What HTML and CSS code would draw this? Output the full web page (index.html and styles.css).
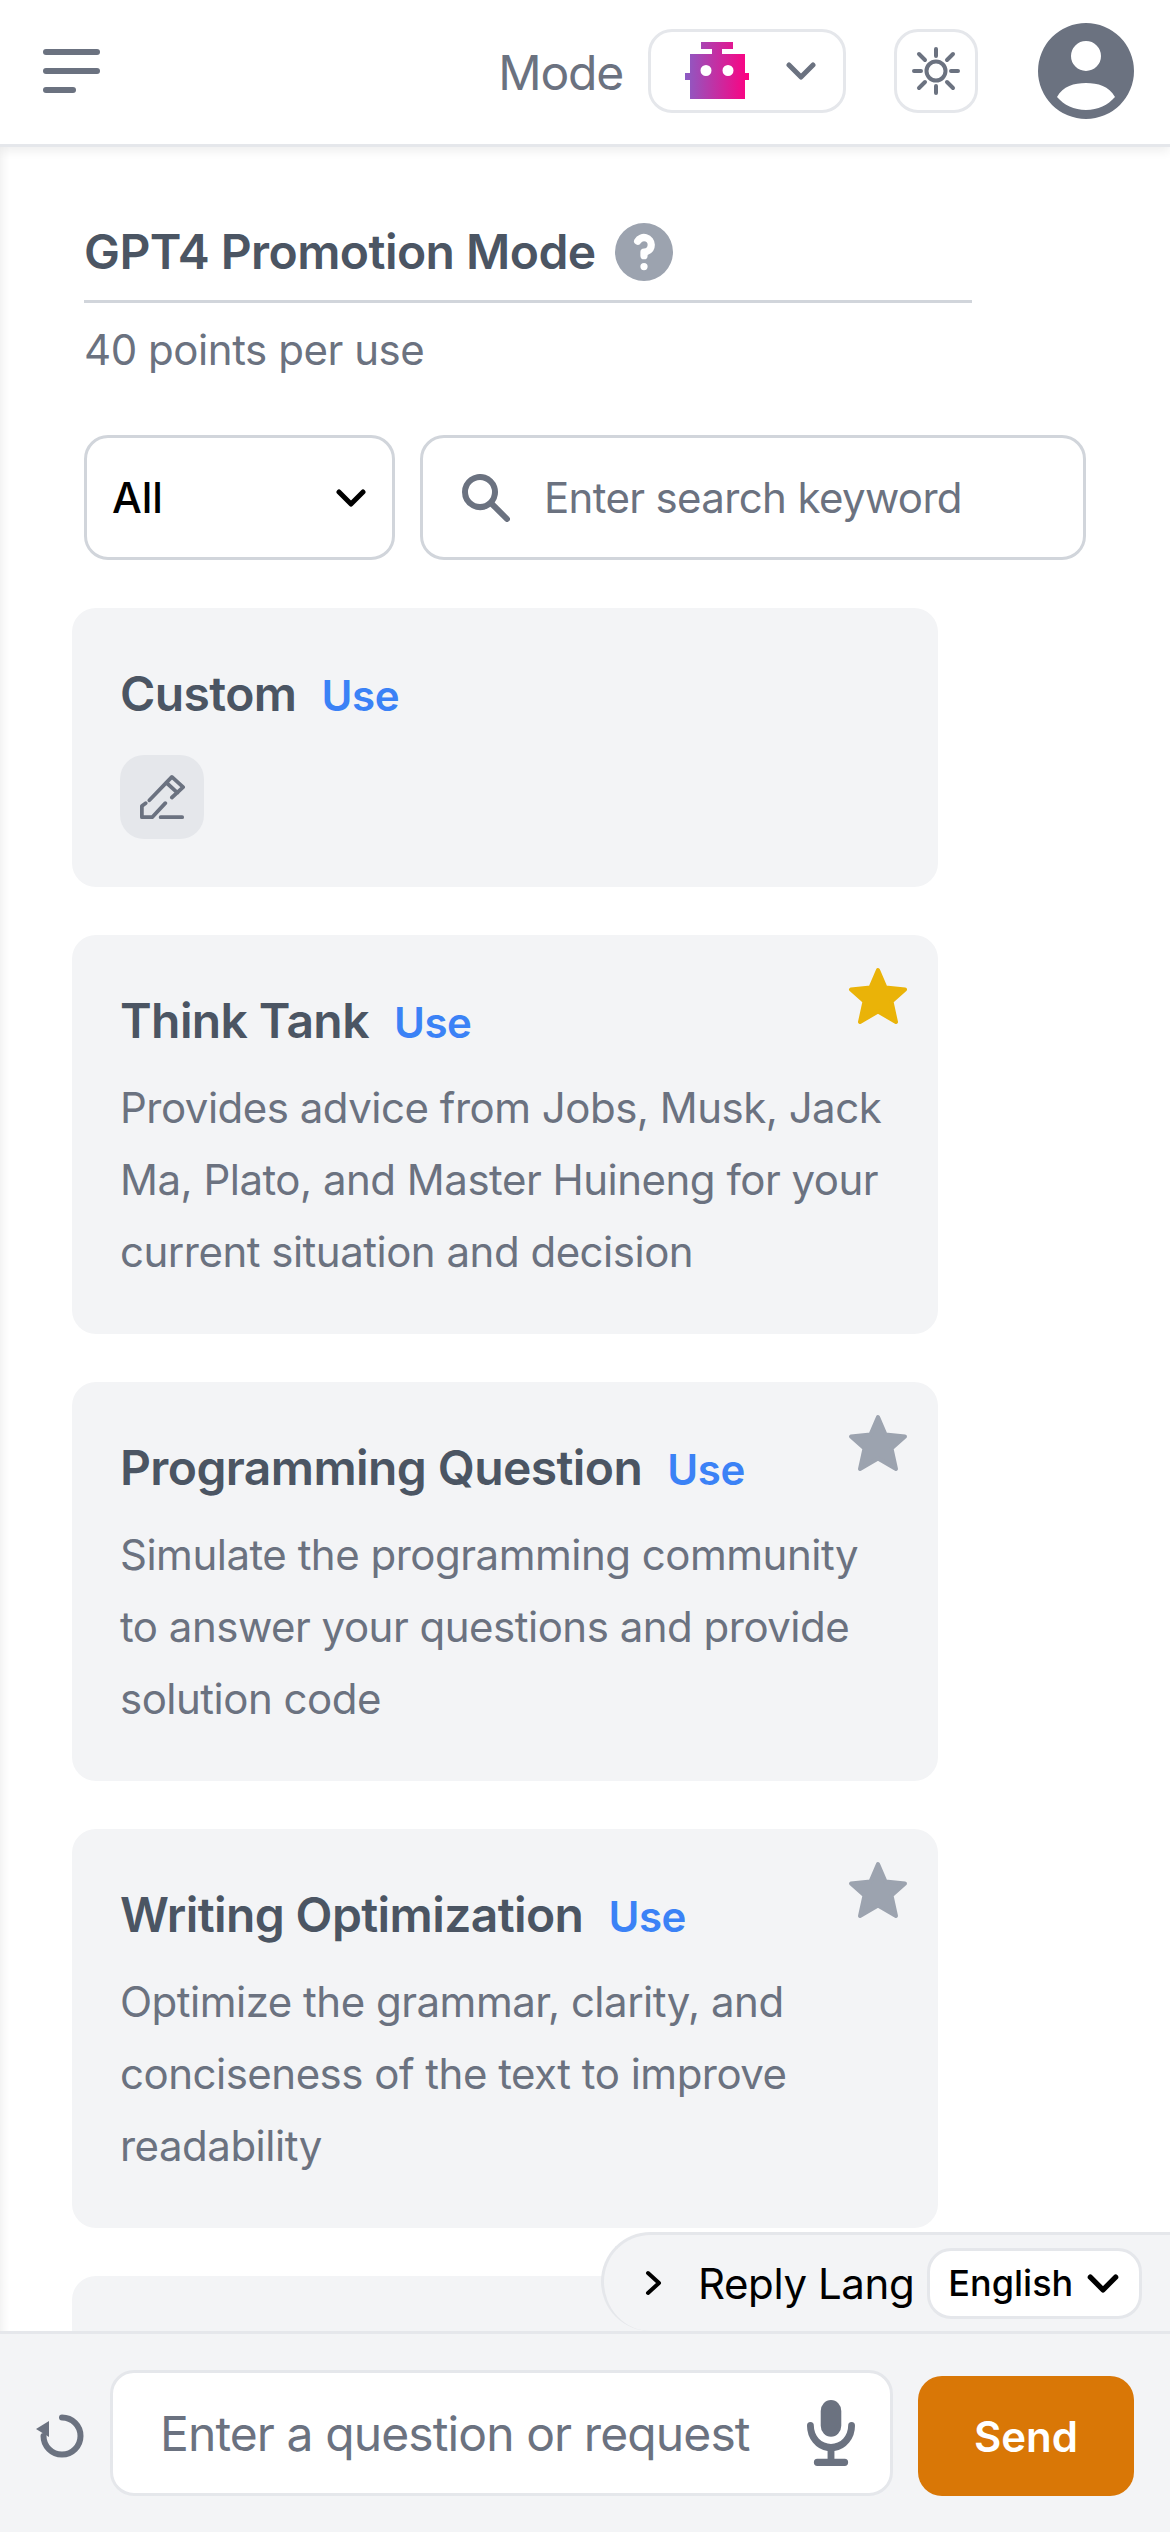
FILE: index.html
```html
<!DOCTYPE html>
<html lang="en">
<head>
<meta charset="utf-8">
<title>GPT4 Promotion Mode</title>
<link rel="stylesheet" href="styles.css">
</head>
<body>
<div class="app">
  <header class="topbar">
    <button class="menu-btn" aria-label="Menu">
      <span class="bar"></span><span class="bar"></span><span class="bar bar-short"></span>
    </button>
    <div class="top-right">
      <span class="mode-label">Mode</span>
      <div class="mode-select">
        <svg class="robot" viewBox="0 0 64 57">
          <defs><linearGradient id="rg" x1="0" x2="1" y1="0" y2="0"><stop offset="0" stop-color="#8b5cc4"/><stop offset="1" stop-color="#ff0080"/></linearGradient></defs>
          <path fill="url(#rg)" fill-rule="evenodd" d="M16 0h32v7H37v5h23v19h4v7h-4v19H5V38H0v-7h5V12h22V7H16zM21 23a5.500 5.500 0 1 0 0 11 5.500 5.500 0 0 0 0-11zM43 23a5.500 5.500 0 1 0 0 11 5.500 5.500 0 0 0 0-11z"/>
        </svg>
        <svg class="chev chev-gray" viewBox="0 0 30 18"><path d="M3 3l12 12L27 3"/></svg>
      </div>
      <div class="theme-btn">
        <svg class="sun" viewBox="0 0 48 48"><circle cx="24" cy="24" r="9.500"/><path d="M24 2v7M24 39v7M2 24h7M39 24h7M7 7l6 6M35 35l6 6M7 41l6-6M35 13l6-6"/></svg>
      </div>
      <svg class="avatar" viewBox="0 0 96 96"><path fill="#6b7280" fill-rule="evenodd" d="M48 0a48 48 0 1 0 0 96 48 48 0 0 0 0-96zM48 18a15 15 0 1 1 0 30 15 15 0 0 1 0-30zM19 74c6-11 17-14 29-14s23 3 29 14c-7 8-17 13-29 13s-22-5-29-13z"/></svg>
    </div>
  </header>

  <main class="content">
    <div class="title-block">
      <div class="title-row">
        <h1 class="page-title">GPT4 Promotion Mode</h1>
        <svg class="help" viewBox="2 2 16 16"><path fill="#9ca3af" fill-rule="evenodd" d="M18 10a8 8 0 11-16 0 8 8 0 0116 0zm-8-3a1 1 0 00-.867.5 1 1 0 11-1.731-1A3 3 0 0113 8a3.001 3.001 0 01-2 2.830V11a1 1 0 11-2 0v-1a1 1 0 011-1 1 1 0 100-2zm0 8a1 1 0 100-2 1 1 0 000 2z"/></svg>
      </div>
      <p class="points">40 points per use</p>
    </div>

    <div class="filters">
      <div class="category">
        <span>All</span>
        <svg class="chev chev-black" viewBox="0 0 30 18"><path d="M3 3l12 12L27 3"/></svg>
      </div>
      <label class="search">
        <svg class="search-icon" viewBox="2 2 16 16"><path fill="#6b7280" fill-rule="evenodd" d="M8 4a4 4 0 100 8 4 4 0 000-8zM2 8a6 6 0 1110.890 3.476l4.817 4.817a1 1 0 01-1.414 1.414l-4.816-4.816A6 6 0 012 8z"/></svg>
        <input class="search-input" type="text" placeholder="Enter search keyword">
      </label>
    </div>

    <div class="cards">
      <article class="card">
        <div class="card-head"><h2 class="card-title">Custom</h2><a class="use">Use</a></div>
        <div class="edit-btn">
          <svg class="pencil" viewBox="0 0 48 48"><path d="M10 27L34 2l12 11-12 11M28 8l12 11M27 30L13 45H2V33l4-3M22 45h23"/></svg>
        </div>
      </article>

      <article class="card card-text">
        <svg class="star star-on" viewBox="0 0 62 58"><path d="M31 3l7.500 17.500 19.500 2-13.500 12 4.500 20.500-18-10.500-18 10.500 4.500-20.500L4 22.500l19.500-2z"/></svg>
        <div class="card-head"><h2 class="card-title">Think Tank</h2><a class="use">Use</a></div>
        <p class="card-desc">Provides advice from Jobs, Musk, Jack Ma, Plato, and Master Huineng for your current situation and decision</p>
      </article>

      <article class="card card-text">
        <svg class="star" viewBox="0 0 62 58"><path d="M31 3l7.500 17.500 19.500 2-13.500 12 4.500 20.500-18-10.500-18 10.500 4.500-20.500L4 22.500l19.500-2z"/></svg>
        <div class="card-head"><h2 class="card-title">Programming Question</h2><a class="use">Use</a></div>
        <p class="card-desc">Simulate the programming community to answer your questions and provide solution code</p>
      </article>

      <article class="card card-text">
        <svg class="star" viewBox="0 0 62 58"><path d="M31 3l7.500 17.500 19.500 2-13.500 12 4.500 20.500-18-10.500-18 10.500 4.500-20.500L4 22.500l19.500-2z"/></svg>
        <div class="card-head"><h2 class="card-title">Writing Optimization</h2><a class="use">Use</a></div>
        <p class="card-desc">Optimize the grammar, clarity, and conciseness of the text to improve readability</p>
      </article>

      <article class="card card-text"></article>
    </div>

    <div class="reply-lang">
      <svg class="chev-right" viewBox="0 0 18 26"><path d="M3 3l11 10L3 23"/></svg>
      <span class="reply-label">Reply Lang</span>
      <div class="lang-select">
        <span>English</span>
        <svg class="chev chev-black chev-small" viewBox="0 0 30 18"><path d="M3 3l12 12L27 3"/></svg>
      </div>
    </div>
  </main>

  <footer class="composer">
    <svg class="refresh" viewBox="0 0 48 46"><path d="M26 4.500A18.500 18.500 0 1 1 7.500 23"/><path class="refresh-head" d="M0 16L13 8v16z"/></svg>
    <div class="input-wrap">
      <input class="question" type="text" placeholder="Enter a question or request">
      <svg class="mic" viewBox="3 1 14 18" preserveAspectRatio="none"><path fill="#6b7280" fill-rule="evenodd" d="M7 4a3 3 0 016 0v4a3 3 0 11-6 0V4zm4 10.930A7.001 7.001 0 0017 8a1 1 0 10-2 0A5 5 0 015 8a1 1 0 00-2 0 7.001 7.001 0 006 6.930V17H6a1 1 0 100 2h8a1 1 0 100-2h-3v-2.070z"/></svg>
    </div>
    <button class="send">Send</button>
  </footer>
</div>
</body>
</html>
```

FILE: styles.css
```css
* { box-sizing: border-box; margin: 0; padding: 0; }
html, body { width: 1170px; height: 2532px; overflow: hidden; background: #fff; }
body { font-family: Inter, "Noto Sans", sans-serif; color: #4b5563; }
.app { display: flex; flex-direction: column; height: 2532px; position: relative; }
.app::after { content: ""; position: absolute; inset: 0; pointer-events: none; box-shadow: inset 10px 0 10px -8px rgba(0,0,0,.07); }

.topbar { flex: 0 0 147px; display: flex; align-items: center; justify-content: space-between; padding: 0 36px 3px 43px; background: #fff; border-bottom: 3px solid #e5e7eb; box-shadow: 0 4px 10px rgba(0,0,0,.07); position: relative; z-index: 3; }
.menu-btn { display: flex; flex-direction: column; gap: 13px; width: 57px; background: none; border: 0; }
.bar { display: block; height: 6px; border-radius: 3px; background: #6b7280; }
.bar-short { width: 33px; }
.top-right { display: flex; align-items: center; }
.mode-label { font-size: 48px; letter-spacing: -1.2px; padding-top: 3px; color: #6b7280; margin-right: 25px; }
.mode-select { width: 198px; height: 84px; border: 3px solid #e5e7eb; border-radius: 24px; display: flex; align-items: center; padding-left: 34px; gap: 37px; margin-right: 48px; }
.robot { width: 64px; height: 57px; }
.chev { fill: none; stroke-width: 5px; stroke-linecap: round; stroke-linejoin: round; display: block; }
.chev-gray { width: 30px; height: 18px; stroke: #6b7280; }
.chev-black { width: 30px; height: 18px; stroke: #000; }
.theme-btn { width: 84px; height: 84px; border: 3px solid #e5e7eb; border-radius: 24px; display: flex; align-items: center; justify-content: center; margin-right: 60px; }
.sun { width: 48px; height: 48px; fill: none; stroke: #6b7280; stroke-width: 4px; stroke-linecap: round; }
.avatar { width: 96px; height: 96px; display: block; }

.content { flex: 1; min-height: 0; overflow: hidden; position: relative; padding: 0 84px 0 72px; }
.title-block { padding-left: 12px; }
.title-row { width: 888px; height: 156px; padding-top: 56px; display: flex; align-items: center; gap: 19px; border-bottom: 3px solid #d1d5db; }
.page-title { font-size: 48px; line-height: 72px; font-weight: 600; letter-spacing: -.55px; color: #4b5563; white-space: nowrap; }
.help { width: 58px; height: 58px; display: block; }
.points { font-size: 42px; line-height: 60px; letter-spacing: -.45px; color: #6b7280; margin-top: 17px; }

.filters { display: flex; gap: 25px; margin: 55px 0 48px 12px; height: 125px; }
.category { width: 311px; border: 3px solid #d1d5db; border-radius: 24px; display: flex; align-items: center; justify-content: space-between; padding: 0 26px 0 25px; font-size: 42px; font-weight: 500; color: #000; }
.search { width: 666px; border: 3px solid #d1d5db; border-radius: 24px; display: flex; align-items: center; padding-left: 39px; gap: 34px; }
.search-icon { width: 48px; height: 48px; flex: none; }
.search-input { border: 0; outline: 0; background: none; flex: 1; min-width: 0; font: 400 42px Inter, sans-serif; letter-spacing: -.65px; color: #374151; }
.search-input::placeholder { color: #6b7280; opacity: 1; }

.cards { display: flex; flex-direction: column; gap: 48px; width: 866px; }
.card { position: relative; background: #f3f4f6; border-radius: 24px; padding: 50px 48px 48px; height: 279px; flex: none; }
.card-text { height: 399px; }
.card-head { display: flex; align-items: baseline; gap: 25px; }
.card-title { font-size: 48px; line-height: 72px; font-weight: 600; letter-spacing: -.6px; color: #4b5563; white-space: nowrap; }
.use { font-size: 42px; font-weight: 600; letter-spacing: -.4px; color: #3b82f6; }
.edit-btn { width: 84px; height: 84px; background: #e5e7eb; border-radius: 24px; display: flex; align-items: center; justify-content: center; margin-top: 25px; }
.pencil { width: 45px; height: 47px; fill: none; stroke: #6b7280; stroke-width: 4px; stroke-linecap: round; stroke-linejoin: round; }
.star { position: absolute; top: 32px; right: 29px; width: 62px; height: 58px; fill: #9ca3af; stroke: #9ca3af; stroke-width: 4px; stroke-linejoin: round; }
.star-on { fill: #eab308; stroke: #eab308; }
.card-desc { font-size: 42px; line-height: 72px; letter-spacing: -.5px; color: #6b7280; margin-top: 15px; }

.reply-lang { position: absolute; top: 2085px; left: 601px; width: 580px; height: 99px; background: #f3f4f6; border: 3px solid #e5e7eb; border-right: 0; border-bottom: 0; border-radius: 50px 0 0 50px; display: flex; align-items: center; padding-left: 41px; }
.chev-right { width: 18px; height: 26px; fill: none; stroke: #000; stroke-width: 4px; stroke-linecap: round; stroke-linejoin: round; flex: none; }
.reply-label { font-size: 42px; letter-spacing: -.4px; color: #000; margin-left: 35px; white-space: nowrap; }
.lang-select { margin-left: 13px; width: 215px; height: 71px; background: #fff; border: 3px solid #e5e7eb; border-radius: 24px; display: flex; align-items: center; padding-left: 18px; gap: 14px; font-size: 36px; font-weight: 500; color: #000; }
.chev-small { width: 32px; height: 19px; }

.composer { flex: 0 0 201px; display: flex; align-items: flex-start; background: #f3f4f6; border-top: 3px solid #e5e7eb; padding: 36px 36px 0 36px; position: relative; z-index: 2; }
.refresh { width: 48px; height: 46px; margin: 43px 26px 0 0; flex: none; fill: none; stroke: #6b7280; stroke-width: 6px; stroke-linecap: round; }
.refresh-head { fill: #6b7280; stroke: none; }
.input-wrap { width: 783px; height: 126px; background: #fff; border: 3px solid #e5e7eb; border-radius: 24px; display: flex; align-items: center; padding: 0 35px 0 47px; }
.question { flex: 1; min-width: 0; border: 0; outline: 0; background: none; font: 400 48px Inter, sans-serif; letter-spacing: -.9px; color: #374151; }
.question::placeholder { color: #6b7280; opacity: 1; }
.mic { width: 48px; height: 66px; flex: none; }
.send { width: 216px; height: 120px; margin: 6px 0 0 25px; background: #d97706; border: 0; border-radius: 24px; color: #fff; font: 600 42px Inter, sans-serif; }
```
